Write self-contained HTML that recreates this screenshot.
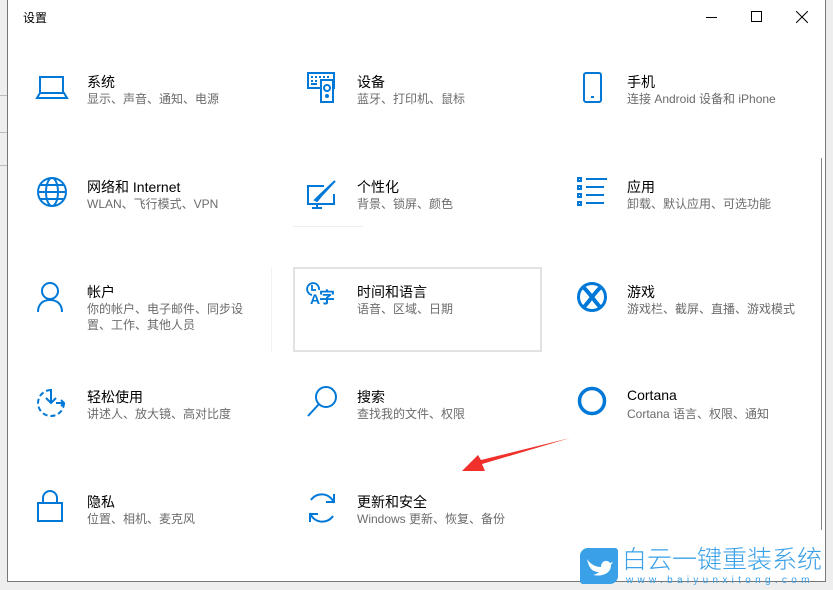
<!DOCTYPE html>
<html><head><meta charset="utf-8"><style>
*{margin:0;padding:0;box-sizing:border-box}
body{width:833px;height:590px;background:#eeeeee;position:relative;overflow:hidden;font-family:"Liberation Sans","Noto Sans CJK SC",sans-serif}
#win{position:absolute;left:7px;top:0;width:819px;height:582px;background:#fff;border:1px solid #777;border-top:none}
.t{position:absolute;font-size:14px;color:#000;white-space:nowrap}
.s{position:absolute;font-size:12px;color:#6b6b6b;white-space:nowrap;line-height:16px}
svg.i{position:absolute;overflow:visible}
svg.i *{stroke:#0078d7;fill:none;stroke-width:2}
</style></head><body>
<div style="position:absolute;left:0;top:95px;width:7px;height:1px;background:#bbb"></div>
<div style="position:absolute;left:0;top:132px;width:7px;height:1px;background:#bbb"></div>
<div style="position:absolute;left:0;top:165px;width:7px;height:1px;background:#bbb"></div>
<div id="win">
<div class="t" style="left:15px;top:9px;font-size:12px">设置</div>
<div style="position:absolute;left:698px;top:17px;width:11px;height:1px;background:#000"></div>
<div style="position:absolute;left:743px;top:11px;width:11px;height:11px;border:1px solid #000"></div>
<svg style="position:absolute;left:788px;top:11px" width="12" height="12"><path d="M0 0L12 12M12 0L0 12" stroke="#000" stroke-width="1"/></svg>
<div style="position:absolute;right:3px;top:158px;width:1px;height:372px;background:#888"></div>
<div style="position:absolute;left:285px;top:267px;width:249px;height:85px;border:2px solid #e2e2e2"></div>
<div style="position:absolute;left:285px;top:226px;width:70px;height:1px;background:#eee"></div>
<div style="position:absolute;left:263px;top:267px;width:1px;height:85px;background:#f2f2f2"></div>
</div>

<svg class="i" style="left:37px;top:76px" width="30" height="24"><rect x="3" y="1" width="23" height="16"/><path d="M0 22H30L27 17H3Z"/></svg>
<div class="t" style="left:87px;top:72px">系统</div><div class="s" style="left:87px;top:91px">显示、声音、通知、电源</div>

<svg class="i" style="left:307px;top:72px" width="30" height="32"><rect x="1" y="1" width="26" height="15"/><rect x="14" y="8" width="12" height="22" style="fill:#fff"/><circle cx="20" cy="16" r="3"/><circle cx="20" cy="24" r="1"/><path d="M4 5h2M8 5h2M12 5h2M16 5h2M20 5h2M4 9h2M8 9h2M4 12h6" /></svg>
<div class="t" style="left:357px;top:72px">设备</div><div class="s" style="left:357px;top:91px">蓝牙、打印机、鼠标</div>

<svg class="i" style="left:583px;top:72px" width="20" height="32"><rect x="1" y="1" width="17" height="29" rx="2"/><path d="M8 25h3"/></svg>
<div class="t" style="left:627px;top:72px">手机</div><div class="s" style="left:627px;top:91px">连接 Android 设备和 iPhone</div>

<svg class="i" style="left:37px;top:177px" width="30" height="30"><circle cx="15" cy="15" r="14"/><ellipse cx="15" cy="15" rx="6" ry="14"/><path d="M1 15H29M3 8H27M3 22H27"/></svg>
<div class="t" style="left:87px;top:177px">网络和 Internet</div><div class="s" style="left:87px;top:196px">WLAN、飞行模式、VPN</div>

<svg class="i" style="left:307px;top:180px" width="30" height="30"><path d="M17 6H1V24H27V14"/><path d="M10 24V28M5 28H15"/><path d="M28 1L14 16L10 21L8 20L12 16Z"/></svg>
<div class="t" style="left:357px;top:177px">个性化</div><div class="s" style="left:357px;top:196px">背景、锁屏、颜色</div>

<svg class="i" style="left:577px;top:177px" width="30" height="30"><rect x="1" y="1" width="3" height="3"/><rect x="1" y="9" width="3" height="3"/><rect x="1" y="17" width="3" height="3"/><rect x="1" y="25" width="3" height="3"/><path d="M9 2H30M9 10H27M9 18H27M9 26H27"/></svg>
<div class="t" style="left:627px;top:177px">应用</div><div class="s" style="left:627px;top:196px">卸载、默认应用、可选功能</div>

<svg class="i" style="left:37px;top:282px" width="26" height="30"><circle cx="13" cy="9" r="8"/><path d="M1 30C1 22 6 18 13 18S25 22 25 30"/></svg>
<div class="t" style="left:87px;top:282px">帐户</div><div class="s" style="left:87px;top:301px">你的帐户、电子邮件、同步设<br>置、工作、其他人员</div>

<svg class="i" style="left:306px;top:282px" width="20" height="20"><path d="M6 13A6 6 0 1 1 13 8" style="stroke-width:1.8"/><path d="M6 3V8H10" style="stroke-width:1.8"/></svg>
<div style="position:absolute;left:310px;top:291px;font:bold 14px 'Liberation Sans',sans-serif;color:#0078d7">A</div>
<div style="position:absolute;left:319px;top:286px;font:bold 16px 'Noto Sans CJK SC',sans-serif;color:#0078d7;line-height:20px">字</div>
<div class="t" style="left:357px;top:282px">时间和语言</div><div class="s" style="left:357px;top:301px">语音、区域、日期</div>

<svg class="i" style="left:577px;top:282px" width="30" height="30"><circle cx="15" cy="15" r="13.5" style="stroke-width:3"/><path d="M6 5C12 10 18 20 24 26M24 5C18 10 12 20 6 26" style="stroke-width:4"/></svg>
<div class="t" style="left:627px;top:282px">游戏</div><div class="s" style="left:627px;top:301px">游戏栏、截屏、直播、游戏模式</div>

<svg class="i" style="left:36px;top:387px" width="32" height="32"><path d="M15 3A13 13 0 1 0 28 16" style="stroke-dasharray:5 3"/><path d="M15 2V15M10 11L15 16L20 11M20 16H28M25 13L28 16L25 19"/></svg>
<div class="t" style="left:87px;top:387px">轻松使用</div><div class="s" style="left:87px;top:406px">讲述人、放大镜、高对比度</div>

<svg class="i" style="left:307px;top:386px" width="30" height="32"><circle cx="19" cy="11" r="10"/><path d="M12 18L1 30"/></svg>
<div class="t" style="left:357px;top:387px">搜索</div><div class="s" style="left:357px;top:406px">查找我的文件、权限</div>

<svg class="i" style="left:577px;top:386px" width="30" height="30"><circle cx="15" cy="15" r="12.5" style="stroke-width:3.5"/></svg>
<div class="t" style="left:627px;top:387px">Cortana</div><div class="s" style="left:627px;top:406px">Cortana 语言、权限、通知</div>

<svg class="i" style="left:37px;top:490px" width="26" height="32"><path d="M6 13V8A7 7 0 0 1 20 8V13"/><rect x="1" y="13" width="24" height="18"/></svg>
<div class="t" style="left:87px;top:492px">隐私</div><div class="s" style="left:87px;top:511px">位置、相机、麦克风</div>

<svg class="i" style="left:307px;top:492px" width="30" height="32"><path d="M27 11A13 13 0 0 0 4 8M3 21A13 13 0 0 0 26 24"/><path d="M27 2V10H19M3 30V22H11"/></svg>
<div class="t" style="left:357px;top:492px">更新和安全</div><div class="s" style="left:357px;top:511px">Windows 更新、恢复、备份</div>

<svg style="position:absolute;left:460px;top:436px" width="112" height="40"><path d="M110 2L22 28L25 35L2 35L18 19L21 24Z" fill="#f0302a"/></svg>

<div style="position:absolute;left:580px;top:548px;width:38px;height:36px;background:#3aa0e8;border-radius:8px 3px 8px 3px"></div>
<svg style="position:absolute;left:585px;top:555px" width="28" height="22"><path d="M2 4C6 10 11 12 16 12C16 6 22 4 25 8L28 7L26 10C26 18 18 22 8 20C12 19 14 17 14 17C8 17 4 14 2 4Z" fill="#fff"/></svg>
<div style="position:absolute;left:622px;top:544px;font-size:25px;line-height:29px;color:#3aa0e8;letter-spacing:0;font-family:'Noto Sans CJK SC',sans-serif;font-weight:300">白云一键重装系统</div>
<div style="position:absolute;left:626px;top:575px;font-size:10px;color:#3aa0e8;letter-spacing:4.3px">www.baiyunxitong.com</div>
</body></html>
